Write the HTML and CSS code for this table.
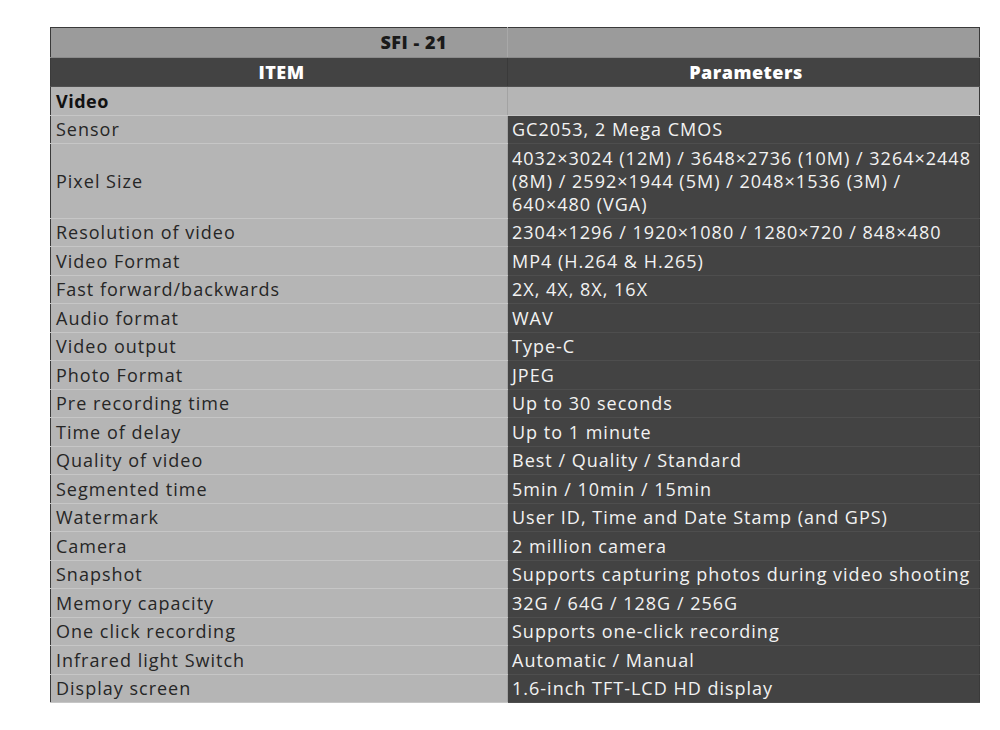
FILE: index.html
```html
<!DOCTYPE html>
<html>
<head>
<meta charset="utf-8">
<link rel="stylesheet" href="styles.css">
</head>
<body>
<div class="page">
<table class="spec">
  <colgroup><col class="c-item"><col class="c-param"></colgroup>
  <tr class="r-title"><td class="title">SFI - 21</td><td class="title-blank"></td></tr>
  <tr class="r-head"><th>ITEM</th><th>Parameters</th></tr>
  <tr class="r-section"><td class="section">Video</td><td class="section-blank"></td></tr>
  <tr><td class="k">Sensor</td><td class="v">GC2053, 2 Mega CMOS</td></tr>
  <tr><td class="k">Pixel Size</td><td class="v">4032×3024 (12M) / 3648×2736 (10M) / 3264×2448 (8M) / 2592×1944 (5M) / 2048×1536 (3M) / 640×480 (VGA)</td></tr>
  <tr><td class="k">Resolution of video</td><td class="v">2304×1296 / 1920×1080 / 1280×720 / 848×480</td></tr>
  <tr><td class="k">Video Format</td><td class="v">MP4 (H.264 &amp; H.265)</td></tr>
  <tr><td class="k">Fast forward/backwards</td><td class="v">2X, 4X, 8X, 16X</td></tr>
  <tr><td class="k">Audio format</td><td class="v">WAV</td></tr>
  <tr><td class="k">Video output</td><td class="v">Type-C</td></tr>
  <tr><td class="k">Photo Format</td><td class="v">JPEG</td></tr>
  <tr><td class="k">Pre recording time</td><td class="v">Up to 30 seconds</td></tr>
  <tr><td class="k">Time of delay</td><td class="v">Up to 1 minute</td></tr>
  <tr><td class="k">Quality of video</td><td class="v">Best / Quality / Standard</td></tr>
  <tr><td class="k">Segmented time</td><td class="v">5min / 10min / 15min</td></tr>
  <tr><td class="k">Watermark</td><td class="v">User ID, Time and Date Stamp (and GPS)</td></tr>
  <tr><td class="k">Camera</td><td class="v">2 million camera</td></tr>
  <tr><td class="k">Snapshot</td><td class="v">Supports capturing photos during video shooting</td></tr>
  <tr><td class="k">Memory capacity</td><td class="v">32G / 64G / 128G / 256G</td></tr>
  <tr><td class="k">One click recording</td><td class="v">Supports one-click recording</td></tr>
  <tr><td class="k">Infrared light Switch</td><td class="v">Automatic / Manual</td></tr>
  <tr><td class="k">Display screen</td><td class="v">1.6-inch TFT-LCD HD display</td></tr>
</table>
</div>
</body>
</html>
```

FILE: styles.css
```css
html, body {
  margin: 0;
  padding: 0;
  background: #ffffff;
}
.page {
  padding: 27px 0 0 50px;
}
.spec {
  width: 929px;
  border-collapse: collapse;
  table-layout: fixed;
  font-family: "Open Sans", "DejaVu Sans", sans-serif;
  font-size: 18px;
  letter-spacing: 1px;
  line-height: 23px;
  border: 1px solid #3a3a3a;
}
.c-item { width: 457px; }
.c-param { width: 472px; }
.spec td, .spec th {
  padding: 2.5px 0 2px 5px;
  vertical-align: middle;
  overflow: hidden;
  white-space: normal;
}
.r-title td {
  background: #9b9b9b;
  border-bottom: 1px solid #8a8a8a;
  padding-top: 3px;
  padding-bottom: 2.5px;
}
.title {
  text-align: right;
  padding-right: 60px !important;
  font-weight: 800;
  letter-spacing: 0.5px;
  color: #1a1a1a;
  border-right: 1px solid #a8a8a8;
}
.r-head th {
  background: #434343;
  color: #ffffff;
  font-weight: 800;
  letter-spacing: 0.5px;
  text-align: center;
  border-bottom: 1px solid #505050;
  padding-top: 3px;
  padding-bottom: 2.5px;
}
.r-head th:first-child { border-right: 1px solid #3a3a3a; }
.section, .section-blank {
  background: #b5b5b5;
  border-bottom: 1px solid #c6c6c6;
}
.section {
  font-weight: 700;
  color: #111;
  letter-spacing: 0.5px;
  border-right: 1px solid #a3a3a3;
}
.k {
  background: #b5b5b5;
  color: #262626;
  border-bottom: 1px solid #c6c6c6;
  border-right: 1px solid #a3a3a3;
}
.v {
  background: #434343;
  color: #f2f2f2;
  border-bottom: 1px solid #4e4e4e;
  padding-left: 4px !important;
}
```
